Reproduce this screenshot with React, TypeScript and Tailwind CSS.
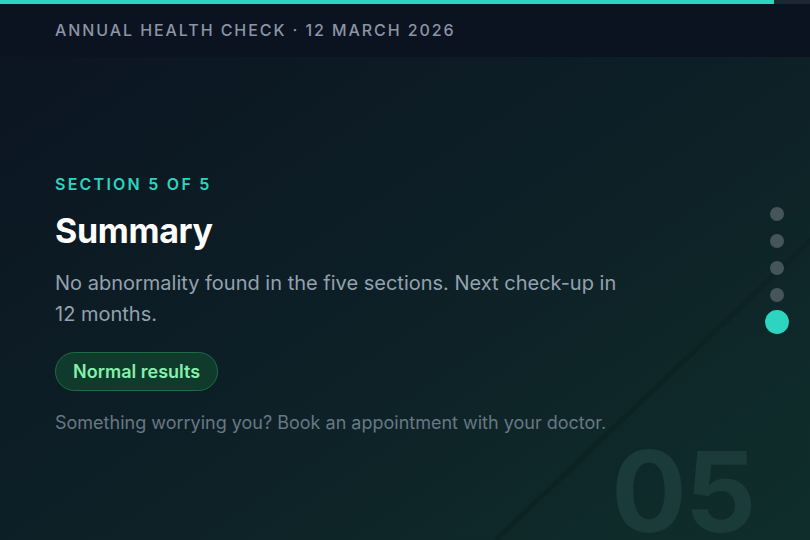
const dots = [1, 2, 3, 4, 5];
const current = 5;

export default function App() {
  return (
    <div
      className="relative flex h-[540px] w-full flex-col overflow-hidden bg-gradient-to-br from-[#0b1421] via-[#0d1f26] to-[#0f2e2b] text-white"
      style={{ fontFamily: "Inter, 'Noto Sans', sans-serif" }}
    >
      {/* faint diagonal stroke */}
      <svg className="pointer-events-none absolute inset-0 h-full w-full" viewBox="0 0 810 540" preserveAspectRatio="none">
        <line x1="480" y1="555" x2="830" y2="222" stroke="#0a1a1c" strokeOpacity="0.3" strokeWidth="5" />
      </svg>

      <header className="relative z-10 h-[57px] shrink-0 bg-[#0b1220]">
        <div className="h-1 w-full bg-[#1e2632]">
          <div className="h-full w-[95.5%] bg-[#2dd4bf]" />
        </div>
        <div className="px-[55px] pt-[14px] text-[16px] font-medium uppercase tracking-[0.12em] text-[#8b95a5]">
          Annual health check · 12 March 2026
        </div>
      </header>

      <main className="relative z-10 flex flex-1 flex-col justify-center px-[55px] pt-[11px]">
        <div className="text-[16px] font-semibold uppercase tracking-[0.14em] text-[#2dd4bf]">Section 5 of 5</div>
        <h1 className="mt-[14px] text-[34px] font-bold leading-tight tracking-[-0.01em] text-white">Summary</h1>
        <p className="mt-[15px] max-w-[575px] text-[20px] leading-[31px] text-[#94a1ae]">
          No abnormality found in the five sections. Next check-up in 12 months.
        </p>
        <div className="mt-[22px] flex">
          <span className="flex h-[39px] items-center rounded-full border border-[#1f6b45] bg-[#0f3a2c] px-[17px] text-[18px] font-semibold text-[#86efac]">
            Normal results
          </span>
        </div>
        <p className="mt-[18px] text-[18px] text-[#687884]">
          Something worrying you? Book an appointment with your doctor.
        </p>
      </main>

      <nav className="absolute right-[26px] top-[calc(50%-2px)] z-10 flex -translate-y-1/2 flex-col items-center gap-[13px]">
        {dots.map((d) => (
          <span
            key={d}
            className={
              d === current
                ? "h-3.5 w-3.5 scale-[1.7] rounded-full bg-[#2dd4bf]"
                : "h-3.5 w-3.5 rounded-full bg-[#45555a]"
            }
          />
        ))}
      </nav>

      <div className="pointer-events-none absolute bottom-[-7px] right-[56px] text-[112px] font-bold leading-none tracking-[-0.02em] text-[#1b3a3a]">
        05
      </div>
    </div>
  );
}
